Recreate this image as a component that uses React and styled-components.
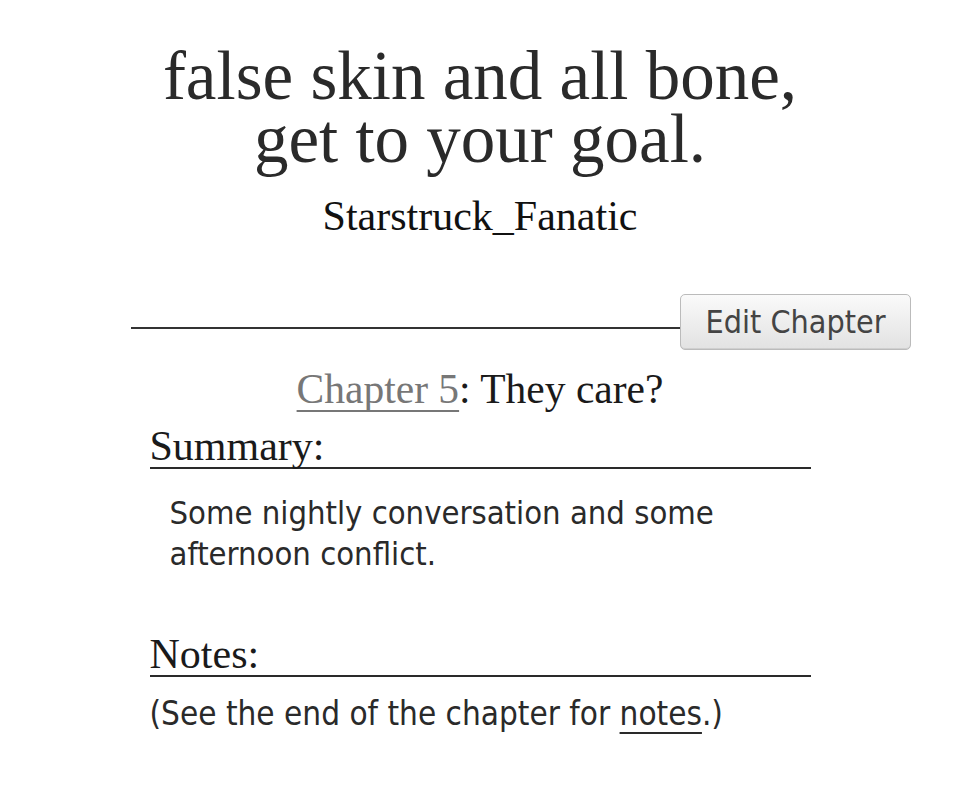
import React from "react";
import styled, { createGlobalStyle } from "styled-components";

const serif = `"Liberation Serif", "DejaVu Serif", Georgia, serif`;
const sans = `"DejaVu Sans Condensed", "DejaVu Sans", Verdana, sans-serif`;

const Global = createGlobalStyle`
  html, body {
    margin: 0;
    padding: 0;
    background: #fff;
  }
  body {
    font-family: ${sans};
    color: #2a2a2a;
  }
`;

const Page = styled.main`
  width: 960px;
  min-height: 793px;
  box-sizing: border-box;
  padding-top: 45px;
  display: flex;
  flex-direction: column;
  align-items: center;
`;

const WorkTitle = styled.h2`
  margin: 0;
  font-family: ${serif};
  font-weight: normal;
  font-size: 69px;
  line-height: 63px;
  text-align: center;
  color: #2a2a2a;
`;

const Byline = styled.h3`
  margin: 21px 0 0;
  font-family: ${serif};
  font-weight: normal;
  font-size: 42px;
  line-height: 48px;
  text-align: center;
  color: #111;
`;

const ActionRow = styled.div`
  align-self: stretch;
  margin: 54px 49px 0 131px;
  display: flex;
  align-items: flex-end;
`;

const Rule = styled.div`
  flex: 1;
  height: 2px;
  margin-bottom: 21px;
  background: #333;
`;

const Button = styled.button`
  width: 231px;
  height: 56px;
  box-sizing: border-box;
  border: 1px solid #bbb;
  border-radius: 5px;
  background: linear-gradient(#fafafa 0%, #e2e2e2 100%);
  box-shadow: inset 0 -1px 0 #cfcfcf;
  font-family: ${sans};
  font-size: 32px;
  color: #444;
  padding: 0;
  cursor: pointer;
`;

const ChapterTitle = styled.h3`
  margin: 15px 0 0;
  font-family: ${serif};
  font-weight: normal;
  font-size: 41.5px;
  line-height: 48px;
  text-align: center;
  color: #1a1a1a;
`;

const ChapterLink = styled.a`
  color: #777;
  text-decoration: underline;
  text-decoration-thickness: 2px;
  text-decoration-skip-ink: none;
  text-underline-offset: 7px;
`;

const Module = styled.section`
  width: 661px;
  margin-top: ${(p) => p.$gap}px;
`;

const ModuleHeading = styled.h3`
  margin: 0;
  font-family: ${serif};
  font-weight: normal;
  font-size: 42px;
  line-height: 42px;
  border-bottom: 2px solid #2a2a2a;
  color: #1a1a1a;
`;

const Blurb = styled.blockquote`
  margin: 24px 0 0;
  padding: 0 40px 0 20px;
  font-family: ${sans};
  font-size: 32.5px;
  line-height: 41px;
  color: #2a2a2a;
`;

const NoteText = styled.p`
  margin: 16px 0 0;
  font-family: ${sans};
  font-size: 33px;
  line-height: 41px;
  color: #2a2a2a;
`;

const NotesLink = styled.a`
  color: #2a2a2a;
  text-decoration: underline;
  text-decoration-thickness: 2px;
  text-decoration-skip-ink: none;
  text-underline-offset: 7px;
`;

export default function App() {
  return (
    <>
      <Global />
      <Page>
        <WorkTitle>
          false skin and all bone,
          <br />
          get to your goal.
        </WorkTitle>
        <Byline>Starstruck_Fanatic</Byline>
        <ActionRow>
          <Rule />
          <Button type="button">Edit Chapter</Button>
        </ActionRow>
        <ChapterTitle>
          <ChapterLink href="#chapter-5">Chapter 5</ChapterLink>: They care?
        </ChapterTitle>
        <Module $gap={12}>
          <ModuleHeading>Summary:</ModuleHeading>
          <Blurb>Some nightly conversation and some afternoon conflict.</Blurb>
        </Module>
        <Module $gap={58}>
          <ModuleHeading>Notes:</ModuleHeading>
          <NoteText>
            (See the end of the chapter for <NotesLink href="#notes">notes</NotesLink>.)
          </NoteText>
        </Module>
      </Page>
    </>
  );
}
